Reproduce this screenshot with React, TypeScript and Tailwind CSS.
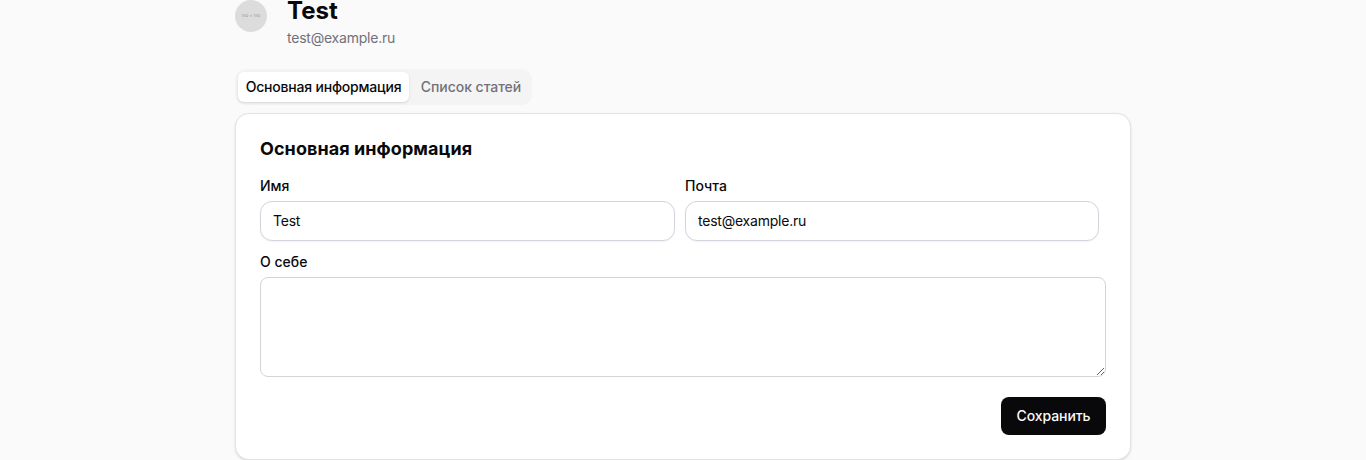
import React from "react";

function Field({ label, value, id }: { label: string; value: string; id: string }) {
  return (
    <div className="flex flex-col">
      <label htmlFor={id} className="mb-[5px] h-5 text-sm font-medium leading-5">
        {label}
      </label>
      <input
        id={id}
        defaultValue={value}
        className="h-10 w-full rounded-xl border border-[#d4d4de] bg-white px-3 pb-0.5 text-sm tracking-[-0.22px] shadow-xs outline-none"
      />
    </div>
  );
}

export default function App() {
  return (
    <div className="h-[460px] overflow-hidden bg-[#fafafa] font-['Inter','Liberation_Sans',sans-serif] text-[#09090b]">
      <main className="mx-auto w-[896px]">
        <header className="flex h-12 gap-5">
          <div className="flex size-8 items-center justify-center whitespace-nowrap rounded-full bg-[#dcdcdc] text-[4px] leading-none tracking-[0.1px] text-[#969696]">
            150 × 150
          </div>
          <div>
            <h1 className="text-2xl font-bold leading-[22px]">Test</h1>
            <p className="mt-1.5 text-sm leading-5 tracking-[-0.22px] text-[#71717a]">test@example.ru</p>
          </div>
        </header>
        <nav className="mt-[21px] flex h-9 w-[297px] gap-[3px] rounded-[10px] bg-[#f4f4f5] p-[3px] text-sm font-medium">
          <button className="h-[30px] w-[171px] whitespace-nowrap rounded-md bg-white tracking-[-0.2px] shadow-sm">
            Основная информация
          </button>
          <button className="h-[30px] w-[117px] whitespace-nowrap pl-px tracking-[-0.04px] text-[#71717a]">
            Список статей
          </button>
        </nav>
        <section className="mt-2 h-[347px] rounded-[14px] border border-[#e4e4e7] bg-white px-6 pt-[21px] shadow-sm">
          <h2 className="text-lg font-bold leading-7 tracking-[0.07px]">Основная информация</h2>
          <div className="mt-[13px] grid grid-cols-[415px_414px] gap-[10px]">
            <Field id="name" label="Имя" value="Test" />
            <Field id="email" label="Почта" value="test@example.ru" />
          </div>
          <label htmlFor="about" className="mt-[11px] block text-sm font-medium leading-5">
            О себе
          </label>
          <textarea
            id="about"
            className="mt-[5px] block h-[100px] w-full rounded-lg border border-[#d4d4d8] bg-white outline-none"
          />
          <div className="mt-5 flex justify-end">
            <button className="h-[38px] w-[105px] rounded-lg bg-[#09090b] text-sm font-medium tracking-[-0.1px] text-[#fafafa]">
              Сохранить
            </button>
          </div>
        </section>
      </main>
    </div>
  );
}
